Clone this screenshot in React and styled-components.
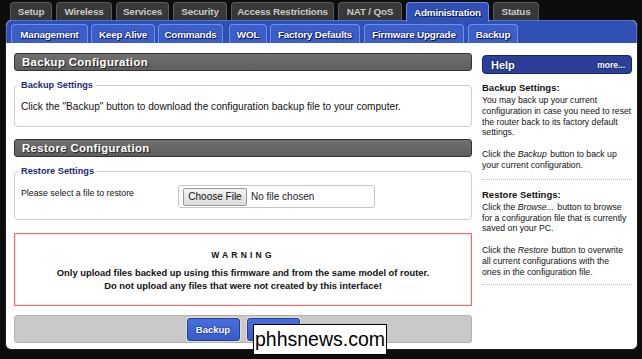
import React from 'react';
import styled, { createGlobalStyle } from 'styled-components';

const GlobalStyle = createGlobalStyle`
  body {
    margin: 0;
    background: #0d0d0d;
    font-family: "Liberation Sans", Arial, sans-serif;
  }
`;

const Page = styled.div`
  position: relative;
  width: 642px;
  height: 359px;
  overflow: hidden;
  background: #0d0d0d;
`;

const TopTabs = styled.div`
  display: flex;
  gap: 4px;
  padding: 2px 0 0 10px;
  height: 18px;
`;

const TopTab = styled.div`
  width: ${({ w }) => w}px;
  height: ${({ active }) => (active ? 20 : 18)}px;
  display: flex;
  align-items: center;
  justify-content: center;
  box-sizing: border-box;
  border: 1px solid ${({ active }) => (active ? '#6f8ee8' : '#5a5a5a')};
  border-bottom: none;
  border-radius: 4px 4px 0 0;
  background: ${({ active }) => (active ? '#2f51b6' : '#383838')};
  color: ${({ active }) => (active ? '#fff' : '#c9c9c9')};
  font-size: 9.9px;
  font-weight: bold;
  letter-spacing: -0.2px;
  text-shadow: ${({ active }) => (active ? '0 0 2px #0c1a55, 1px 1px 0 #0c1a55' : 'none')};
  position: relative;
  z-index: 1;
`;

const Frame = styled.div`
  margin: 0 4px 0 5px;
  height: 330px;
  box-sizing: border-box;
  border-radius: 6px;
  background: #fff;
  border: 1px solid #1d1d1d;
  border-top: none;
  overflow: hidden;
  display: flex;
  flex-direction: column;
`;

const SubTabs = styled.div`
  display: flex;
  align-items: flex-end;
  gap: 3px;
  height: 23px;
  flex-shrink: 0;
  padding-left: 4px;
  background: #2f51b6;
  border: 1px solid #4f6fd4;
  border-bottom: none;
  border-radius: 6px 6px 0 0;
  box-sizing: border-box;
`;

const SubTab = styled.div`
  width: ${({ w }) => w}px;
  height: 19px;
  margin-left: ${({ ml }) => ml || 0}px;
  display: flex;
  align-items: center;
  justify-content: center;
  box-sizing: border-box;
  border: 1px solid #6f8fe6;
  border-bottom: none;
  border-radius: 4px 4px 0 0;
  background: #3b5ecb;
  color: #fff;
  font-size: 9.9px;
  font-weight: bold;
  letter-spacing: -0.2px;
  text-shadow: 0 0 2px #0c1a55, 1px 1px 0 #0c1a55;
`;

const Content = styled.div`
  flex: 1;
  display: flex;
  gap: 10px;
  padding: 10px 0 0 8px;
`;

const Main = styled.div`
  width: 458px;
  display: flex;
  flex-direction: column;
`;

const SectionHead = styled.div`
  height: 18px;
  box-sizing: border-box;
  display: flex;
  align-items: center;
  padding-left: 7px;
  border: 1px solid #333;
  border-radius: 3px;
  background: linear-gradient(#707070, #5e5e5e);
  color: #fff;
  font-size: 11.3px;
  font-weight: bold;
  letter-spacing: 0.4px;
  text-shadow: 1px 1px 1px #222;
  margin-top: ${({ mt }) => mt || 0}px;
`;

const Fieldset = styled.fieldset`
  margin: ${({ mt }) => mt || 0}px 0 0;
  padding: ${({ pt }) => pt}px 6px ${({ pb }) => pb}px;
  border: 1px solid #cdcdcd;
  border-radius: 4px;
`;

const Legend = styled.legend`
  padding: 0 3px;
  margin-left: -3px;
  color: #1b2b7a;
  font-size: 9.2px;
  font-weight: bold;
  line-height: 12px;
`;

const Text = styled.div`
  font-size: ${({ size }) => size || 10.1}px;
  color: #111;
  line-height: 12px;
`;

const FileRow = styled.div`
  display: flex;
  align-items: center;
`;

const FileLabel = styled(Text)`
  width: 157px;
  margin-top: -8px;
`;

const FileBox = styled.div`
  width: 197px;
  height: 23px;
  box-sizing: border-box;
  border: 1px solid #c4c4c4;
  border-radius: 3px;
  display: flex;
  align-items: center;
  gap: 4px;
  padding-left: 4px;
  font-size: 10px;
  color: #222;
`;

const ChooseButton = styled.div`
  height: 18px;
  width: 64px;
  display: flex;
  align-items: center;
  justify-content: center;
  box-sizing: border-box;
  border: 1px solid #9a9a9a;
  border-radius: 2px;
  background: linear-gradient(#f4f4f4, #dcdcdc);
  font-size: 10px;
  color: #111;
`;

const Warning = styled.div`
  margin-top: 13px;
  height: 73px;
  flex-shrink: 0;
  box-sizing: border-box;
  border: 1px solid #f06a6a;
  box-shadow: inset 0 0 0 1px #fde3e3;
  display: flex;
  flex-direction: column;
  align-items: center;
  padding-top: 16px;
  font-weight: bold;
  color: #111;
`;

const WarnTitle = styled.div`
  font-size: 8.5px;
  letter-spacing: 3.2px;
  margin-bottom: 6px;
`;

const WarnLine = styled.div`
  font-size: 9.4px;
  line-height: 13px;
`;

const ButtonBar = styled.div`
  margin-top: 9px;
  height: 28px;
  flex-shrink: 0;
  box-sizing: border-box;
  border: 1px solid #b2b2b2;
  border-radius: 3px;
  background: #c9c9c9;
  display: flex;
  align-items: center;
  justify-content: center;
  gap: 7px;
`;

const BlueButton = styled.div`
  width: 53px;
  height: 23px;
  box-sizing: border-box;
  display: flex;
  align-items: center;
  justify-content: center;
  border: 1px solid #1f3c9e;
  border-radius: 3px;
  box-shadow: 0 0 0 1px #e9dfb9;
  background: linear-gradient(#4a6fdc, #365bcc);
  color: #fff;
  font-size: 9.5px;
  font-weight: bold;
  text-shadow: 0 0 2px #0c1a55;
`;

const Help = styled.div`
  width: 150px;
  display: flex;
  flex-direction: column;
`;

const HelpHead = styled.div`
  margin-top: 2px;
  height: 19px;
  box-sizing: border-box;
  display: flex;
  align-items: center;
  justify-content: space-between;
  padding: 0 6px 0 8px;
  border: 1px solid #17256a;
  border-radius: 4px;
  background: #2b3f98;
  color: #fff;
  font-weight: bold;
  text-shadow: 0 0 2px #0a1240;
`;

const HelpTitle = styled.span`
  font-size: 11px;
`;

const More = styled.span`
  font-size: 8.5px;
`;

const HelpSub = styled.div`
  font-size: 9.5px;
  font-weight: bold;
  color: #111;
  line-height: 13px;
  margin-top: ${({ mt }) => mt || 0}px;
`;

const HelpText = styled.div`
  font-size: 8.7px;
  color: #111;
  line-height: 10.8px;
  margin-top: ${({ mt }) => mt || 0}px;
`;

const HelpLine = styled(HelpText)`
  display: flex;
  white-space: pre;
`;

const Em = styled.i`
  padding-right: 1px;
`;

const Divider = styled.div`
  border-top: 1px dotted #bdbdbd;
  margin-top: ${({ mt }) => mt || 0}px;
`;

const Watermark = styled.div`
  position: absolute;
  left: 253px;
  top: 324px;
  width: 134px;
  height: 31px;
  box-sizing: border-box;
  border: 1.5px solid #000;
  background: #fff;
  display: flex;
  align-items: center;
  justify-content: center;
  font-family: "Liberation Sans", Arial, sans-serif;
  font-size: 19.5px;
  color: #000;
`;

const topTabs = [
  ['Setup', 42],
  ['Wireless', 56],
  ['Services', 53],
  ['Security', 54],
  ['Access Restrictions', 103],
  ['NAT / QoS', 64],
  ['Administration', 83, true],
  ['Status', 46],
];

const subTabs = [
  ['Management', 77, 0],
  ['Keep Alive', 64, 0],
  ['Commands', 65, 0],
  ['WOL', 38, 3],
  ['Factory Defaults', 90, 0],
  ['Firmware Upgrade', 100, 1],
  ['Backup', 50, 1],
];

const ItalicLine = ({ before, word, after, mt }) => (
  <HelpLine mt={mt}>
    <span>{before}</span>
    <Em>{word}</Em>
    <span>{after}</span>
  </HelpLine>
);

export default function App() {
  return (
    <Page>
      <GlobalStyle />
      <TopTabs>
        {topTabs.map(([label, w, active]) => (
          <TopTab key={label} w={w} active={active}>{label}</TopTab>
        ))}
      </TopTabs>
      <Frame>
        <SubTabs>
          {subTabs.map(([label, w, ml]) => (
            <SubTab key={label} w={w} ml={ml}>{label}</SubTab>
          ))}
        </SubTabs>
        <Content>
          <Main>
            <SectionHead>Backup Configuration</SectionHead>
            <Fieldset mt={8} pt={10} pb={13}>
              <Legend>Backup Settings</Legend>
              <Text>Click the "Backup" button to download the configuration backup file to your computer.</Text>
            </Fieldset>
            <SectionHead mt={12}>Restore Configuration</SectionHead>
            <Fieldset mt={8} pt={8} pb={11}>
              <Legend>Restore Settings</Legend>
              <FileRow>
                <FileLabel size={8.8}>Please select a file to restore</FileLabel>
                <FileBox>
                  <ChooseButton>Choose File</ChooseButton>
                  No file chosen
                </FileBox>
              </FileRow>
            </Fieldset>
            <Warning>
              <WarnTitle>WARNING</WarnTitle>
              <WarnLine>Only upload files backed up using this firmware and from the same model of router.</WarnLine>
              <WarnLine>Do not upload any files that were not created by this interface!</WarnLine>
            </Warning>
            <ButtonBar>
              <BlueButton>Backup</BlueButton>
              <BlueButton>Restore</BlueButton>
            </ButtonBar>
          </Main>
          <Help>
            <HelpHead>
              <HelpTitle>Help</HelpTitle>
              <More>more...</More>
            </HelpHead>
            <HelpSub mt={7}>Backup Settings:</HelpSub>
            <HelpText mt={1}>
              You may back up your current configuration in case you need to reset the router back to its factory default settings.
            </HelpText>
            <ItalicLine mt={11} before="Click the " word="Backup" after=" button to back up" />
            <HelpText>your current configuration.</HelpText>
            <Divider mt={8} />
            <HelpSub mt={8}>Restore Settings:</HelpSub>
            <ItalicLine mt={1} before="Click the " word="Browse..." after=" button to browse" />
            <HelpText>for a configuration file that is currently saved on your PC.</HelpText>
            <ItalicLine mt={11} before="Click the " word="Restore" after=" button to overwrite" />
            <HelpText>all current configurations with the<br />ones in the configuration file.</HelpText>
            <Divider mt={6} />
          </Help>
        </Content>
      </Frame>
      <Watermark>phhsnews.com</Watermark>
    </Page>
  );
}
